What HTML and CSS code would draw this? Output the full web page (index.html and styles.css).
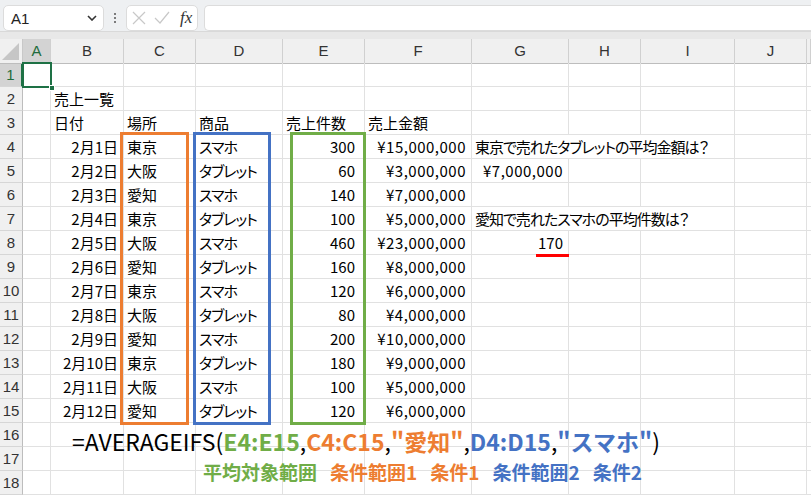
FILE: index.html
```html
<!DOCTYPE html>
<html lang="ja">
<head>
<meta charset="utf-8">
<link rel="stylesheet" href="styles.css">
</head>
<body>
<div class="app">
  <div class="topbar">
    <div class="namebox"><span class="nb-text">A1</span>
      <svg class="chev" width="10" height="6" viewBox="0 0 10 6"><path d="M1 1 L5 5 L9 1" fill="none" stroke="#333" stroke-width="1.6"/></svg>
    </div>
    <div class="dots"><i></i><i></i><i></i></div>
    <div class="fxbox">
      <svg width="14" height="14" viewBox="0 0 14 14"><path d="M1 1 L13 13 M13 1 L1 13" stroke="#c8c8c8" stroke-width="1.2" fill="none"/></svg>
      <svg width="16" height="14" viewBox="0 0 16 14"><path d="M1 7 L6 12 L15 1" stroke="#c8c8c8" stroke-width="1.2" fill="none"/></svg>
      <span class="fx">fx</span>
    </div>
    <div class="formula"></div>
  </div>
  <div class="band"></div>
  <div class="sheet">
    <div class="row head">
      <div class="corner"><span class="tri"></span></div>
      <div class="ch sel">A</div><div class="ch">B</div><div class="ch">C</div><div class="ch">D</div><div class="ch">E</div><div class="ch">F</div><div class="ch">G</div><div class="ch">H</div><div class="ch">I</div><div class="ch">J</div><div class="ch"></div>
    </div>
    <div class="row"><div class="rh sel">1</div><div class="c"></div><div class="c"></div><div class="c"></div><div class="c"></div><div class="c"></div><div class="c"></div><div class="c"></div><div class="c"></div><div class="c"></div><div class="c"></div><div class="c"></div></div>
    <div class="row"><div class="rh">2</div><div class="c"></div><div class="c">売上一覧</div><div class="c"></div><div class="c"></div><div class="c"></div><div class="c"></div><div class="c"></div><div class="c"></div><div class="c"></div><div class="c"></div><div class="c"></div></div>
    <div class="row"><div class="rh">3</div><div class="c"></div><div class="c">日付</div><div class="c">場所</div><div class="c">商品</div><div class="c">売上件数</div><div class="c">売上金額</div><div class="c"></div><div class="c"></div><div class="c"></div><div class="c"></div><div class="c"></div></div>
    <div class="row"><div class="rh">4</div><div class="c"></div><div class="c r">2月1日</div><div class="c">東京</div><div class="c k">スマホ</div><div class="c r e">300</div><div class="c r m">¥15,000,000</div><div class="c span3">東京で売れたタブレットの平均金額は？</div><div class="c"></div><div class="c"></div></div>
    <div class="row"><div class="rh">5</div><div class="c"></div><div class="c r">2月2日</div><div class="c">大阪</div><div class="c k">タブレット</div><div class="c r e">60</div><div class="c r m">¥3,000,000</div><div class="c r m">¥7,000,000</div><div class="c"></div><div class="c"></div><div class="c"></div><div class="c"></div></div>
    <div class="row"><div class="rh">6</div><div class="c"></div><div class="c r">2月3日</div><div class="c">愛知</div><div class="c k">スマホ</div><div class="c r e">140</div><div class="c r m">¥7,000,000</div><div class="c"></div><div class="c"></div><div class="c"></div><div class="c"></div><div class="c"></div></div>
    <div class="row"><div class="rh">7</div><div class="c"></div><div class="c r">2月4日</div><div class="c">東京</div><div class="c k">タブレット</div><div class="c r e">100</div><div class="c r m">¥5,000,000</div><div class="c span3">愛知で売れたスマホの平均件数は？</div><div class="c"></div><div class="c"></div></div>
    <div class="row"><div class="rh">8</div><div class="c"></div><div class="c r">2月5日</div><div class="c">大阪</div><div class="c k">スマホ</div><div class="c r e">460</div><div class="c r m">¥23,000,000</div><div class="c r">170</div><div class="c"></div><div class="c"></div><div class="c"></div><div class="c"></div></div>
    <div class="row"><div class="rh">9</div><div class="c"></div><div class="c r">2月6日</div><div class="c">愛知</div><div class="c k">タブレット</div><div class="c r e">160</div><div class="c r m">¥8,000,000</div><div class="c"></div><div class="c"></div><div class="c"></div><div class="c"></div><div class="c"></div></div>
    <div class="row"><div class="rh">10</div><div class="c"></div><div class="c r">2月7日</div><div class="c">東京</div><div class="c k">スマホ</div><div class="c r e">120</div><div class="c r m">¥6,000,000</div><div class="c"></div><div class="c"></div><div class="c"></div><div class="c"></div><div class="c"></div></div>
    <div class="row"><div class="rh">11</div><div class="c"></div><div class="c r">2月8日</div><div class="c">大阪</div><div class="c k">タブレット</div><div class="c r e">80</div><div class="c r m">¥4,000,000</div><div class="c"></div><div class="c"></div><div class="c"></div><div class="c"></div><div class="c"></div></div>
    <div class="row"><div class="rh">12</div><div class="c"></div><div class="c r">2月9日</div><div class="c">愛知</div><div class="c k">スマホ</div><div class="c r e">200</div><div class="c r m">¥10,000,000</div><div class="c"></div><div class="c"></div><div class="c"></div><div class="c"></div><div class="c"></div></div>
    <div class="row"><div class="rh">13</div><div class="c"></div><div class="c r">2月10日</div><div class="c">東京</div><div class="c k">タブレット</div><div class="c r e">180</div><div class="c r m">¥9,000,000</div><div class="c"></div><div class="c"></div><div class="c"></div><div class="c"></div><div class="c"></div></div>
    <div class="row"><div class="rh">14</div><div class="c"></div><div class="c r">2月11日</div><div class="c">大阪</div><div class="c k">スマホ</div><div class="c r e">100</div><div class="c r m">¥5,000,000</div><div class="c"></div><div class="c"></div><div class="c"></div><div class="c"></div><div class="c"></div></div>
    <div class="row"><div class="rh">15</div><div class="c"></div><div class="c r">2月12日</div><div class="c">愛知</div><div class="c k">タブレット</div><div class="c r e">120</div><div class="c r m">¥6,000,000</div><div class="c"></div><div class="c"></div><div class="c"></div><div class="c"></div><div class="c"></div></div>
    <div class="row"><div class="rh">16</div><div class="c"></div><div class="c"></div><div class="c"></div><div class="c"></div><div class="c"></div><div class="c"></div><div class="c"></div><div class="c"></div><div class="c"></div><div class="c"></div><div class="c"></div></div>
    <div class="row"><div class="rh">17</div><div class="c"></div><div class="c"></div><div class="c"></div><div class="c"></div><div class="c"></div><div class="c"></div><div class="c"></div><div class="c"></div><div class="c"></div><div class="c"></div><div class="c"></div></div>
    <div class="row"><div class="rh">18</div><div class="c"></div><div class="c"></div><div class="c"></div><div class="c"></div><div class="c"></div><div class="c"></div><div class="c"></div><div class="c"></div><div class="c"></div><div class="c"></div><div class="c"></div></div>
  </div>

  <div class="selbox"><span class="handle"></span></div>
  <div class="frame f-orange"></div>
  <div class="frame f-blue"></div>
  <div class="frame f-green"></div>
  <div class="redline"></div>

  <div class="bigformula">=AVERAGEIFS(<b class="g">E4:E15</b>,<b class="o">C4:C15</b>,<b class="o">"愛知"</b>,<b class="b">D4:D15</b>,<b class="b">"スマホ"</b>)</div>
  <div class="labels">
    <span class="g">平均対象範囲</span>
    <span class="o">条件範囲1</span>
    <span class="o">条件1</span>
    <span class="b">条件範囲2</span>
    <span class="b">条件2</span>
  </div>
</div>
</body>
</html>
```

FILE: styles.css
```css
* { box-sizing: border-box; }
html, body { margin: 0; padding: 0; }
body {
  width: 811px;
  height: 497px;
  overflow: hidden;
  background: #ffffff;
  font-family: "Noto Sans CJK JP", "Noto Sans", sans-serif;
  color: #000;
}
.app { position: relative; width: 811px; height: 497px; overflow: hidden; }

.topbar {
  height: 32px;
  background: #eef0f2;
  display: flex;
  align-items: flex-start;
  padding: 5px 0 0 3px;
  border-bottom: 1px solid #d9d9d9;
}
.namebox {
  width: 101px;
  height: 26px;
  background: #fff;
  border: 1px solid #dcdcdc;
  border-radius: 5px;
  display: flex;
  align-items: center;
  justify-content: space-between;
  padding: 0 6px 0 7px;
}
.nb-text { font-family: "Liberation Sans", "Noto Sans", sans-serif; font-size: 15px; color: #222; }
.dots {
  width: 22px;
  height: 26px;
  display: flex;
  flex-direction: column;
  align-items: center;
  justify-content: center;
  gap: 2px;
}
.dots i { display: block; width: 2px; height: 2px; background: #555; border-radius: 50%; }
.fxbox {
  width: 72px;
  height: 26px;
  background: #fff;
  border: 1px solid #dcdcdc;
  border-radius: 5px;
  display: flex;
  align-items: center;
  gap: 8px;
  padding: 0 0 0 5px;
}
.fx {
  font-family: "Liberation Serif", "DejaVu Serif", serif;
  font-style: italic;
  font-size: 17px;
  color: #333;
  margin-left: 2px;
}
.formula {
  flex: 1;
  height: 26px;
  margin-left: 6px;
  background: #fff;
  border: 1px solid #dcdcdc;
  border-right: none;
  border-radius: 5px 0 0 5px;
}
.band { height: 7px; background: #e8e8e8; }

.sheet { display: flex; flex-direction: column; }
.row {
  display: grid;
  grid-template-columns: 23px 28px 73px 72px 87px 82px 107px 97px 72px 94px 72px 1fr;
  height: 24px;
}
.head { background: #f0f0f0; }
.corner {
  position: relative;
  background: #f0f0f0;
  border-right: 1px solid #c8c8c8;
  border-bottom: 1px solid #bdbdbd;
}
.tri {
  position: absolute;
  right: 3px;
  bottom: 3px;
  width: 0; height: 0;
  border-left: 17px solid transparent;
  border-bottom: 17px solid #c6c6c6;
}
.ch {
  font-family: "Liberation Sans", "Noto Sans", sans-serif;
  font-size: 15px;
  color: #333;
  text-align: center;
  line-height: 23px;
  border-right: 1px solid #d0d0d0;
  border-bottom: 1px solid #bdbdbd;
}
.ch.sel {
  background: #d3d3d3;
  color: #1e6b3c;
  border-bottom: 2px solid #1e7145;
}
.rh {
  font-family: "Liberation Sans", "Noto Sans", sans-serif;
  font-size: 15px;
  color: #333;
  background: #f0f0f0;
  text-align: center;
  line-height: 23px;
  border-right: 1px solid #bdbdbd;
  border-bottom: 1px solid #d6d6d6;
}
.rh.sel { background: #d3d3d3; color: #1e6b3c; border-right: 2px solid #1e7145; }
.c {
  font-size: 15px;
  line-height: 23px;
  white-space: nowrap;
  padding: 0 3px;
  border-right: 1px solid #e1e1e1;
  border-bottom: 1px solid #e1e1e1;
  overflow: visible;
  font-feature-settings: "palt" 1;
}
.c.r { text-align: right; padding-right: 5px; }
.c.e { padding-right: 9px; }
.c.m { letter-spacing: 0.5px; }
.c.k { letter-spacing: -1px; }
.span3 { grid-column: span 3; letter-spacing: -1px; }

.selbox {
  position: absolute;
  left: 22px;
  top: 62px;
  width: 30px;
  height: 26px;
  border: 2px solid #1e7145;
}
.handle {
  position: absolute;
  right: -5px;
  bottom: -5px;
  width: 6px;
  height: 6px;
  background: #1e7145;
  border: 1px solid #fff;
}
.frame { position: absolute; top: 132px; height: 293px; border: 3px solid; }
.f-orange { left: 120px; width: 69px; border-color: #ed7d31; }
.f-blue { left: 193px; width: 78px; border-color: #4472c4; }
.f-green { left: 290px; width: 76px; border-color: #70ad47; }
.redline { position: absolute; left: 536px; top: 254px; width: 33px; height: 3px; background: #ff0000; }

.bigformula {
  position: absolute;
  left: 72px;
  top: 426px;
  font-size: 23px;
  line-height: 30px;
  white-space: nowrap;
  color: #000;
}
.bigformula b { font-weight: 700; }
.labels {
  position: absolute;
  left: 203px;
  top: 461px;
  display: flex;
  gap: 13px;
  font-size: 19px;
  font-weight: 700;
  line-height: 22px;
  white-space: nowrap;
}
.g { color: #70ad47; }
.o { color: #ed7d31; }
.b { color: #4472c4; }
```
